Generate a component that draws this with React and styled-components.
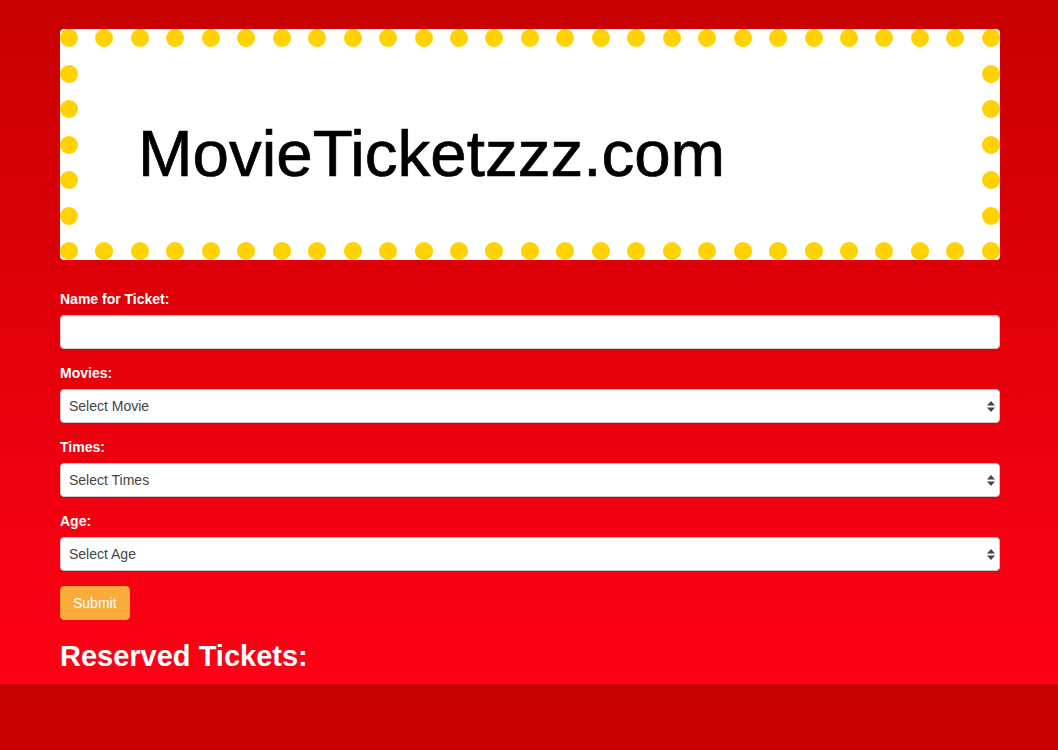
import React from 'react'
import styled, {createGlobalStyle} from "styled-components";

const GlobalStyle = createGlobalStyle`
    html, body{
        margin: 0;
        padding: 0;
        background: #c80000;
        font-family: "Liberation Sans", Arial, Helvetica, sans-serif;
        font-size: 14px;
        line-height: 1.42857;
        color: #333;
    }
`;

const TOP_DOTS = 27;
const SIDE_DOTS = 5;

const movieOptions = ["Select Movie"];
const timeOptions = ["Select Times"];
const ageOptions = ["Select Age"];

export default function App(){
    return(
        <>
        <GlobalStyle/>
        <Page>
            <Container>
                <Marquee>
                    <DotRow>
                        {Array.from({length: TOP_DOTS}).map((_, i) => <Dot key={i}/>)}
                    </DotRow>
                    <MarqueeMiddle>
                        <DotColumn>
                            {Array.from({length: SIDE_DOTS}).map((_, i) => <Dot key={i}/>)}
                        </DotColumn>
                        <Title>MovieTicketzzz.com</Title>
                        <DotColumn>
                            {Array.from({length: SIDE_DOTS}).map((_, i) => <Dot key={i}/>)}
                        </DotColumn>
                    </MarqueeMiddle>
                    <DotRow>
                        {Array.from({length: TOP_DOTS}).map((_, i) => <Dot key={i}/>)}
                    </DotRow>
                </Marquee>

                <form onSubmit={(e)=>e.preventDefault()}>
                    <FormGroup>
                        <Label htmlFor="name">Name for Ticket:</Label>
                        <TextInput id="name" type="text"/>
                    </FormGroup>
                    <FormGroup>
                        <Label htmlFor="movies">Movies:</Label>
                        <Select id="movies" options={movieOptions}/>
                    </FormGroup>
                    <FormGroup>
                        <Label htmlFor="times">Times:</Label>
                        <Select id="times" options={timeOptions}/>
                    </FormGroup>
                    <FormGroup>
                        <Label htmlFor="age">Age:</Label>
                        <Select id="age" options={ageOptions}/>
                    </FormGroup>
                    <SubmitButton type="submit">Submit</SubmitButton>
                </form>

                <Heading>Reserved Tickets:</Heading>
            </Container>
        </Page>
        </>
    );
}

function Select({id, options}){
    return(
        <SelectWrap>
            <NativeSelect id={id} defaultValue={options[0]}>
                {options.map(o => <option key={o}>{o}</option>)}
            </NativeSelect>
            <Arrows width="8" height="11" viewBox="0 0 8 11">
                <path d="M4 0 L8 4.5 L0 4.5 Z" fill="#444"/>
                <path d="M4 11 L8 6.5 L0 6.5 Z" fill="#444"/>
            </Arrows>
        </SelectWrap>
    );
}

const Page=styled.div`
    background: linear-gradient(to bottom, #c80000 0%, #ff0016 100%);
    padding-top: 29px;
`;

const Container=styled.div`
    width: 940px;
    margin: 0 auto;
    padding: 0 59px 0 60px;
`;

const Marquee=styled.div`
    background: #fff;
    border-radius: 4px;
    height: 231px;
    display: flex;
    flex-direction: column;
    justify-content: space-between;
    margin-bottom: 30px;
`;

const DotRow=styled.div`
    display: flex;
    justify-content: space-between;
`;

const DotColumn=styled.div`
    display: flex;
    flex-direction: column;
    justify-content: space-evenly;
`;

const MarqueeMiddle=styled.div`
    flex: 1;
    display: flex;
    justify-content: space-between;
    align-items: stretch;
`;

const Dot=styled.span`
    display: block;
    width: 18px;
    height: 18px;
    border-radius: 50%;
    background: #ffd200;
`;

const Title=styled.h1`
    flex: 1;
    margin: 0;
    align-self: center;
    padding: 18px 0 0 60px;
    font-size: 65.5px;
    font-weight: 400;
    line-height: 1;
    color: #000;
    -webkit-text-stroke: 0.7px #000;
`;

const FormGroup=styled.div`
    margin-bottom: 15px;
`;

const Label=styled.label`
    display: block;
    margin-bottom: 5px;
    font-weight: 700;
    color: #fff;
`;

const TextInput=styled.input`
    display: block;
    box-sizing: border-box;
    width: 100%;
    height: 34px;
    padding: 6px 12px;
    font-family: inherit;
    font-size: 14px;
    color: #555;
    background: #fff;
    border: 1px solid #ccc;
    border-radius: 4px;
    box-shadow: inset 0 1px 1px rgba(0,0,0,.075);
    outline: none;
`;

const SelectWrap=styled.div`
    position: relative;
`;

const NativeSelect=styled.select`
    display: block;
    box-sizing: border-box;
    width: 100%;
    height: 34px;
    padding: 0 24px 0 8px;
    font-family: inherit;
    font-size: 14px;
    color: #444;
    background: #fff;
    border: 1px solid #c8c8c8;
    border-radius: 4px;
    box-shadow: 0 1px 1px rgba(0,0,0,.12);
    appearance: none;
    -webkit-appearance: none;
    outline: none;
`;

const Arrows=styled.svg`
    position: absolute;
    right: 5px;
    top: 12px;
    pointer-events: none;
`;

const SubmitButton=styled.button`
    display: block;
    height: 34px;
    padding: 6px 12px;
    font-family: inherit;
    font-size: 14px;
    line-height: 20px;
    color: #fff;
    background: #f9ab3c;
    border: 1px solid #f5a232;
    border-radius: 4px;
    cursor: pointer;
`;

const Heading=styled.h2`
    margin: 20px 0 0;
    padding-bottom: 11px;
    font-size: 29px;
    font-weight: 700;
    line-height: 33px;
    color: #fff;
`;
